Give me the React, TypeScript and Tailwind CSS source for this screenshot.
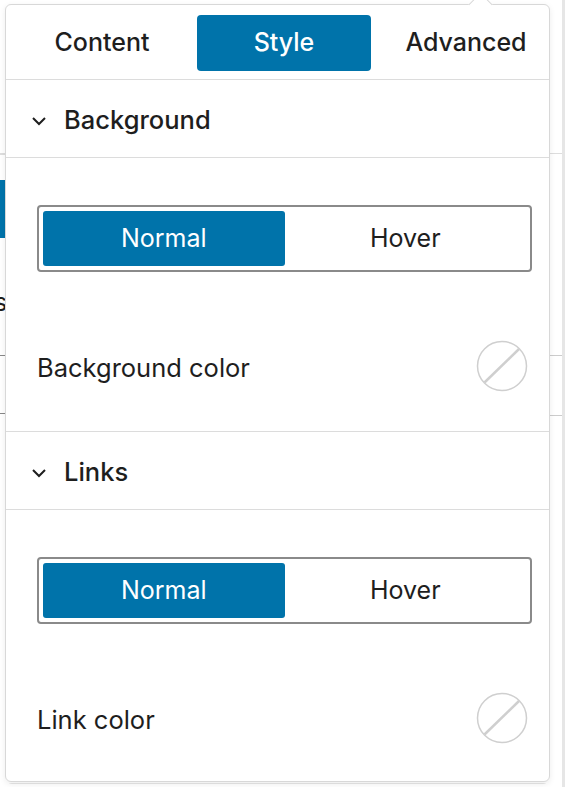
import React from "react";

const font = { fontFamily: "Inter, 'Noto Sans', sans-serif" };

function Chevron() {
  return (
    <svg width="16" height="10" viewBox="0 0 16 10" className="shrink-0">
      <path d="M2 2 L8 8 L14 2" fill="none" stroke="#1e1e1e" strokeWidth="2" />
    </svg>
  );
}

function Swatch() {
  return (
    <svg width="52" height="52" viewBox="0 0 52 52" className="shrink-0">
      <circle cx="26" cy="26" r="24.5" fill="#fff" stroke="#cfcfcf" strokeWidth="1.5" />
      <line x1="8.5" y1="42.5" x2="43" y2="9" stroke="#cfcfcf" strokeWidth="2.5" />
    </svg>
  );
}

function Segmented() {
  return (
    <div className="flex h-[67px] rounded-[4px] border-2 border-[#8a8a8a] p-[4px]">
      <div className="flex flex-1 items-center justify-center rounded-[3px] bg-[#0073aa] text-[25px] text-white">
        Normal
      </div>
      <div className="flex flex-1 items-center justify-center text-[25px] text-[#1e1e1e]">Hover</div>
    </div>
  );
}

function Section({ title, label }: { title: string; label: string }) {
  return (
    <div className="border-b border-[#dcdcdc]">
      <div className="flex h-[78px] items-center gap-[17px] border-b border-[#dcdcdc] pl-[25px] pt-[4px]">
        <Chevron />
        <span className="text-[25.5px] font-medium text-[#1e1e1e]">{title}</span>
      </div>
      <div className="pl-[31px] pr-[17px] pt-[47px] pb-[40px]">
        <Segmented />
        <div className="mt-[69px] flex h-[50px] items-center justify-between">
          <span className="mt-[4px] text-[25.5px] text-[#1e1e1e]">{label}</span>
          <div className="mr-[4px]">
            <Swatch />
          </div>
        </div>
      </div>
    </div>
  );
}

function Tab({ label, active }: { label: string; active?: boolean }) {
  return (
    <div
      className={
        active
          ? "flex h-[56px] w-[174px] shrink-0 items-center justify-center rounded-[4px] bg-[#0073aa] text-[25px] font-medium text-white"
          : "flex h-[56px] w-[174px] shrink-0 items-center justify-center text-[25px] font-medium text-[#1e1e1e]"
      }
    >
      {label}
    </div>
  );
}

function BackgroundPage() {
  return (
    <div className="flex h-[787px] w-[568px]">
      {/* left sliver of the editor page */}
      <div className="flex w-[5px] flex-col overflow-visible">
        <div className="mt-[153px] h-[2px] w-[6px] bg-[#dddddd]" />
        <div className="mt-[25px] h-[58px] w-[5px] bg-[#0073aa]" />
        <div className="ml-[-6px] mt-[54px] text-[25px] leading-[21px] text-[#1e1e1e]">s</div>
        <div className="mt-[42px] h-[1px] w-[5px] bg-[#888]" />
        <div className="mt-[57px] h-[1px] w-[5px] bg-[#888]" />
      </div>
      <div className="flex-1" />
      {/* right sliver */}
      <div className="flex w-[18px]">
        <div className="flex w-[12px] flex-col">
          <div className="mt-[153px] h-[1px] bg-[#dddddd]" />
          <div className="mt-[201px] h-[1px] bg-[#cccccc]" />
          <div className="mt-[59px] h-[1px] bg-[#cccccc]" />
        </div>
        <div className="w-[3px] bg-[#e6e6e6]" />
      </div>
    </div>
  );
}

export default function App() {
  return (
    <div className="relative h-[787px] w-[568px] overflow-hidden bg-white" style={font}>
      <BackgroundPage />

      {/* popover lying over the page */}
      <div className="absolute left-[5px] top-[4px] h-[778px] w-[545px] rounded-[6px] border border-[#d8d8d8] bg-white shadow-[0_2px_6px_rgba(0,0,0,0.08)]">
        <div className="absolute left-[466px] top-[-9px] h-[17px] w-[17px] rotate-45 border-l border-t border-[#d8d8d8] bg-white" />
        <div className="relative overflow-hidden rounded-[6px]">
          <div className="flex h-[75px] gap-[8px] border-b border-[#dcdcdc] pl-[9px] pt-[10px]">
            <Tab label="Content" />
            <Tab label="Style" active />
            <Tab label="Advanced" />
          </div>
          <Section title="Background" label="Background color" />
          <Section title="Links" label="Link color" />
        </div>
      </div>
    </div>
  );
}
